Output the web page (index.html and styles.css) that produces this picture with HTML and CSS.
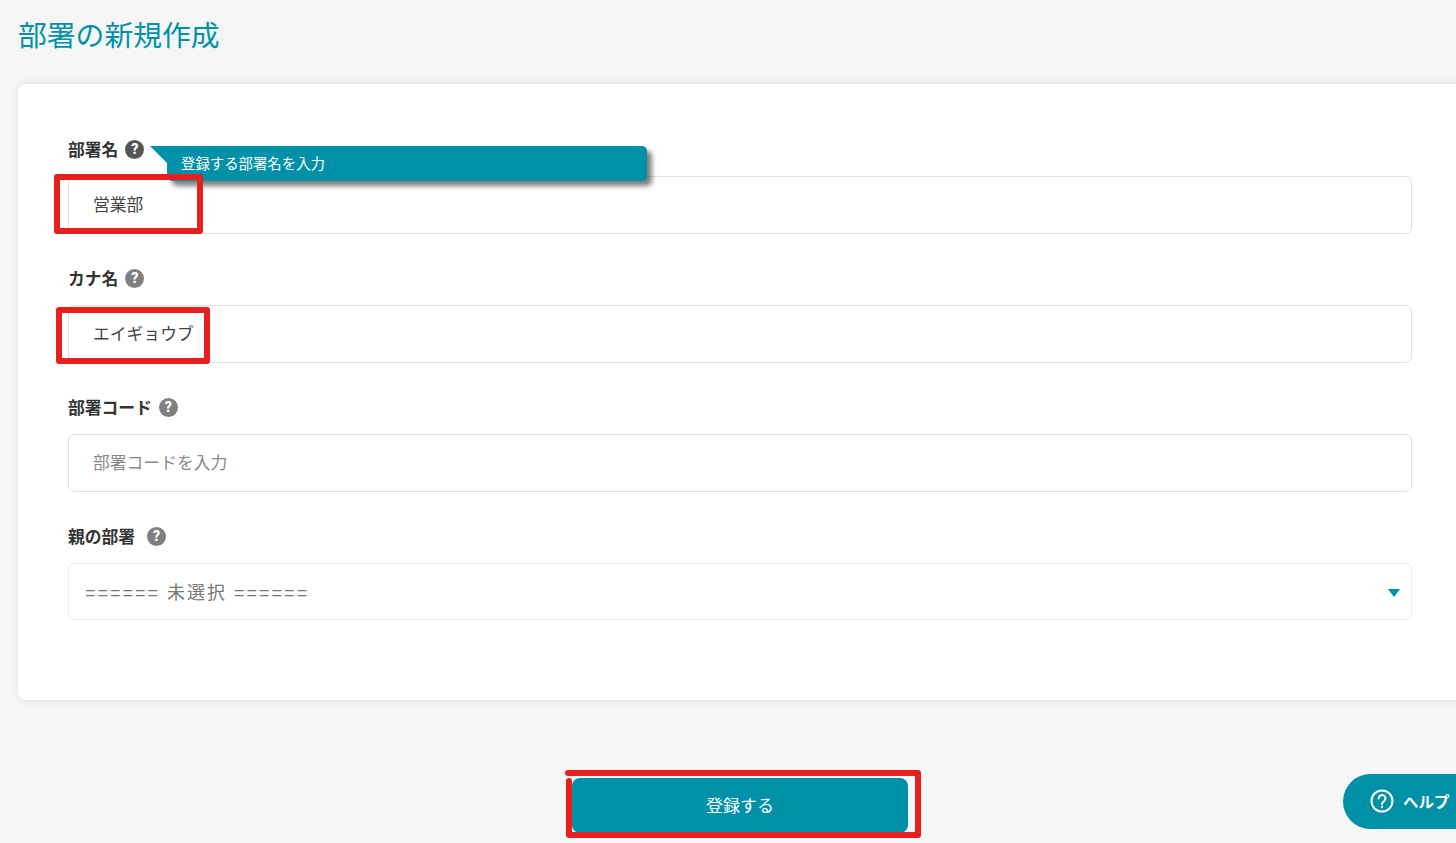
FILE: index.html
```html
<!DOCTYPE html>
<html lang="ja">
<head>
  <meta charset="UTF-8" />
  <meta name="viewport" content="width=device-width, initial-scale=1.0"/>
  <title>部署の新規作成</title>
  <link rel="stylesheet" href="styles.css">
</head>
<body>
  <div class="page">
    <h1 class="page-title">部署の新規作成</h1>

    <form class="card">
      <div class="field">
        <label class="field-label">部署名 <span class="hint hint-active">?</span></label>
        <input class="text-input" type="text" value="営業部" />
        <div class="tooltip">登録する部署名を入力</div>
      </div>
      <div class="field">
        <label class="field-label">カナ名 <span class="hint">?</span></label>
        <input class="text-input" type="text" value="エイギョウブ" />
      </div>
      <div class="field">
        <label class="field-label">部署コード <span class="hint">?</span></label>
        <input class="text-input" type="text" placeholder="部署コードを入力" />
      </div>
      <div class="field">
        <label class="field-label">親の部署 <span class="hint hint-wide">?</span></label>
        <div class="select-wrap">
          <select class="select-input">
            <option>====== 未選択 ======</option>
          </select>
        </div>
      </div>
    </form>

    <div class="actions">
      <button class="submit-btn" type="button">登録する</button>
    </div>
  </div>

  <button class="help-btn" type="button">
    <svg width="24" height="24" viewBox="0 0 24 24" fill="none" stroke="#fff" stroke-width="2">
      <circle cx="12" cy="12" r="10.5"/>
      <path d="M8.6 9.4a3.4 3.4 0 1 1 5.4 2.8c-1.3.9-2 1.5-2 3" stroke-linecap="round"/>
      <circle cx="12" cy="18" r="1.2" fill="#fff" stroke="none"/>
    </svg>
    ヘルプ
  </button>

  <!-- red marks drawn on top of the screenshot -->
  <svg class="marks" width="1456" height="843" fill="none" stroke="#e71f1f" stroke-width="6" stroke-linecap="round" stroke-linejoin="round">
    <path d="M57 177V231H200V177Z"/>
    <path d="M59 310V361H207V310Z"/>
    <path d="M568 773H918V835H569V781"/>
  </svg>
</body>
</html>
```

FILE: styles.css
```css
* {
  box-sizing: border-box;
}

html, body {
  height: 100%;
}

body {
  margin: 0;
  overflow: hidden;
  background: #f6f6f6;
  color: #333;
  font-family: "Noto Sans CJK JP", "Noto Sans", sans-serif;
  font-size: 16.8px;
}

.page {
  width: 1462px;
  padding: 0 0 0 18px;
}

.page-title {
  margin: 0;
  padding-top: 13px;
  height: 84px;
  color: #0091a9;
  font-size: 28.8px;
  font-weight: 400;
  line-height: 42px;
}

.card {
  height: 616px;
  padding: 53px 50px 0;
  background: #fff;
  border-radius: 8px;
  box-shadow: 0 0 8px rgba(0, 0, 0, 0.1);
}

.field {
  position: relative;
  margin-bottom: 32px;
}

.field-label {
  display: flex;
  align-items: center;
  gap: 7px;
  height: 24px;
  margin-bottom: 15px;
  font-weight: 700;
  line-height: 24px;
}

.hint {
  display: inline-block;
  width: 19px;
  height: 19px;
  border-radius: 50%;
  background: #808080;
  color: #fff;
  font-family: "Roboto", sans-serif;
  font-size: 14px;
  font-weight: 900;
  line-height: 19px;
  text-align: center;
}

.hint-active {
  background: #555;
}

.hint-wide {
  margin-left: 5px;
}

.text-input,
.select-input {
  display: block;
  width: 100%;
  height: 58px;
  padding: 0 24px 2px;
  background: #fff;
  border: 1px solid #e0e0e0;
  border-radius: 6px;
  color: #444;
  font: inherit;
  outline: none;
}

.text-input::placeholder {
  color: #8a8a8a;
  opacity: 1;
}

.select-wrap {
  position: relative;
}

.select-wrap::after {
  content: "";
  position: absolute;
  top: 26px;
  right: 12px;
  border-left: 6px solid transparent;
  border-right: 6px solid transparent;
  border-top: 8px solid #0091a9;
}

.select-input {
  height: 57px;
  padding: 2px 16px 0;
  border-color: #ebebeb;
  color: #777;
  font-family: "Liberation Sans", "Noto Sans CJK JP", sans-serif;
  font-size: 18px;
  letter-spacing: 2px;
  appearance: none;
}

.tooltip {
  position: absolute;
  top: 9px;
  left: 99px;
  width: 480px;
  height: 35px;
  padding-left: 14px;
  background: #0091a9;
  border-radius: 0 5px 5px 5px;
  box-shadow: 5px 5px 5px rgba(0, 0, 0, 0.5);
  color: #fff;
  font-size: 14.4px;
  line-height: 34px;
}

.tooltip::before {
  content: "";
  position: absolute;
  top: 0;
  left: -17px;
  border-top: 17px solid #0091a9;
  border-left: 17px solid transparent;
}

.actions {
  display: flex;
  justify-content: center;
  padding-top: 78px;
}

.submit-btn {
  width: 336px;
  height: 55px;
  padding: 0 0 2px;
  background: #0091a9;
  border: none;
  border-radius: 8px;
  color: #fff;
  font: inherit;
  font-size: 17px;
}

.help-btn {
  position: fixed;
  top: 774px;
  left: 1343px;
  display: flex;
  align-items: center;
  gap: 9px;
  width: 140px;
  height: 55px;
  padding: 0 0 2px 27px;
  background: #0091a9;
  border: none;
  border-radius: 28px;
  color: #fff;
  font: 700 15.5px "Noto Sans CJK JP", sans-serif;
}

.marks {
  position: fixed;
  top: 0;
  left: 0;
  pointer-events: none;
}
```
